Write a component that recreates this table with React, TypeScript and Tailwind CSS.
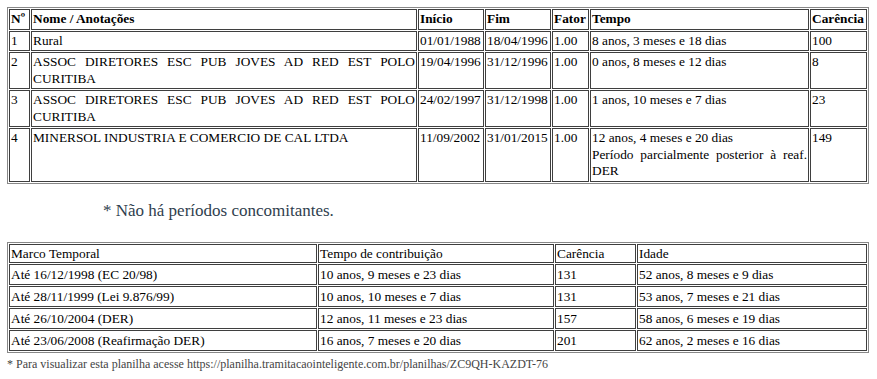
const periodos = [
  {
    n: "1",
    nome: "Rural",
    inicio: "01/01/1988",
    fim: "18/04/1996",
    fator: "1.00",
    tempo: ["8 anos, 3 meses e 18 dias"],
    carencia: "100",
  },
  {
    n: "2",
    nome: "ASSOC DIRETORES ESC PUB JOVES AD RED EST POLO CURITIBA",
    inicio: "19/04/1996",
    fim: "31/12/1996",
    fator: "1.00",
    tempo: ["0 anos, 8 meses e 12 dias"],
    carencia: "8",
  },
  {
    n: "3",
    nome: "ASSOC DIRETORES ESC PUB JOVES AD RED EST POLO CURITIBA",
    inicio: "24/02/1997",
    fim: "31/12/1998",
    fator: "1.00",
    tempo: ["1 anos, 10 meses e 7 dias"],
    carencia: "23",
  },
  {
    n: "4",
    nome: "MINERSOL INDUSTRIA E COMERCIO DE CAL LTDA",
    inicio: "11/09/2002",
    fim: "31/01/2015",
    fator: "1.00",
    tempo: ["12 anos, 4 meses e 20 dias", "Período parcialmente posterior à reaf. DER"],
    carencia: "149",
  },
];

const marcos = [
  ["Até 16/12/1998 (EC 20/98)", "10 anos, 9 meses e 23 dias", "131", "52 anos, 8 meses e 9 dias"],
  ["Até 28/11/1999 (Lei 9.876/99)", "10 anos, 10 meses e 7 dias", "131", "53 anos, 7 meses e 21 dias"],
  ["Até 26/10/2004 (DER)", "12 anos, 11 meses e 23 dias", "157", "58 anos, 6 meses e 19 dias"],
  ["Até 23/06/2008 (Reafirmação DER)", "16 anos, 7 meses e 20 dias", "201", "62 anos, 2 meses e 16 dias"],
];

const cell = "border border-[#3f3f3f] p-[1px] align-top text-justify";
const head = "border border-[#3f3f3f] p-[1px] text-left font-bold";

export default function App() {
  return (
    <div className="min-h-screen bg-white pl-[7px] pt-[7px] text-[13.33px] leading-[16.5px] text-black font-[Liberation_Serif]">
      <table className="w-[862px] table-fixed border-separate border-spacing-[1px] border border-[#888]">
        <thead>
          <tr>
            <th className={`${head} w-[21px]`}>Nº</th>
            <th className={`${head} w-[386px]`}>Nome / Anotações</th>
            <th className={`${head} w-[66px]`}>Início</th>
            <th className={`${head} w-[66px]`}>Fim</th>
            <th className={`${head} w-[37px]`}>Fator</th>
            <th className={`${head} w-[219px]`}>Tempo</th>
            <th className={head}>Carência</th>
          </tr>
        </thead>
        <tbody>
          {periodos.map((p) => (
            <tr key={p.n}>
              <td className={cell}>{p.n}</td>
              <td className={cell}>{p.nome}</td>
              <td className={cell}>{p.inicio}</td>
              <td className={cell}>{p.fim}</td>
              <td className={cell}>{p.fator}</td>
              <td className={cell}>
                {p.tempo.map((t, i) => (
                  <div key={i}>{t}</div>
                ))}
              </td>
              <td className={cell}>{p.carencia}</td>
            </tr>
          ))}
        </tbody>
      </table>

      <p className="pl-[96px] pt-[17px] pb-[21px] text-[17px] leading-[20px] text-[#2f3e4e]">
        * Não há períodos concomitantes.
      </p>

      <table className="w-[862px] table-fixed border-separate border-spacing-[1px] border border-[#888]">
        <thead>
          <tr className="leading-[15px]">
            <td className={`${cell} w-[308px]`}>Marco Temporal</td>
            <td className={`${cell} w-[236px]`}>Tempo de contribuição</td>
            <td className={`${cell} w-[81px]`}>Carência</td>
            <td className={cell}>Idade</td>
          </tr>
        </thead>
        <tbody>
          {marcos.map((m) => (
            <tr key={m[0]} className="leading-[17px]">
              {m.map((v, i) => (
                <td key={i} className={cell}>
                  {v}
                </td>
              ))}
            </tr>
          ))}
        </tbody>
      </table>

      <p className="pt-[4px] text-[12px] leading-[14px] text-[#444]">
        * Para visualizar esta planilha acesse https://planilha.tramitacaointeligente.com.br/planilhas/ZC9QH-KAZDT-76
      </p>
    </div>
  );
}
